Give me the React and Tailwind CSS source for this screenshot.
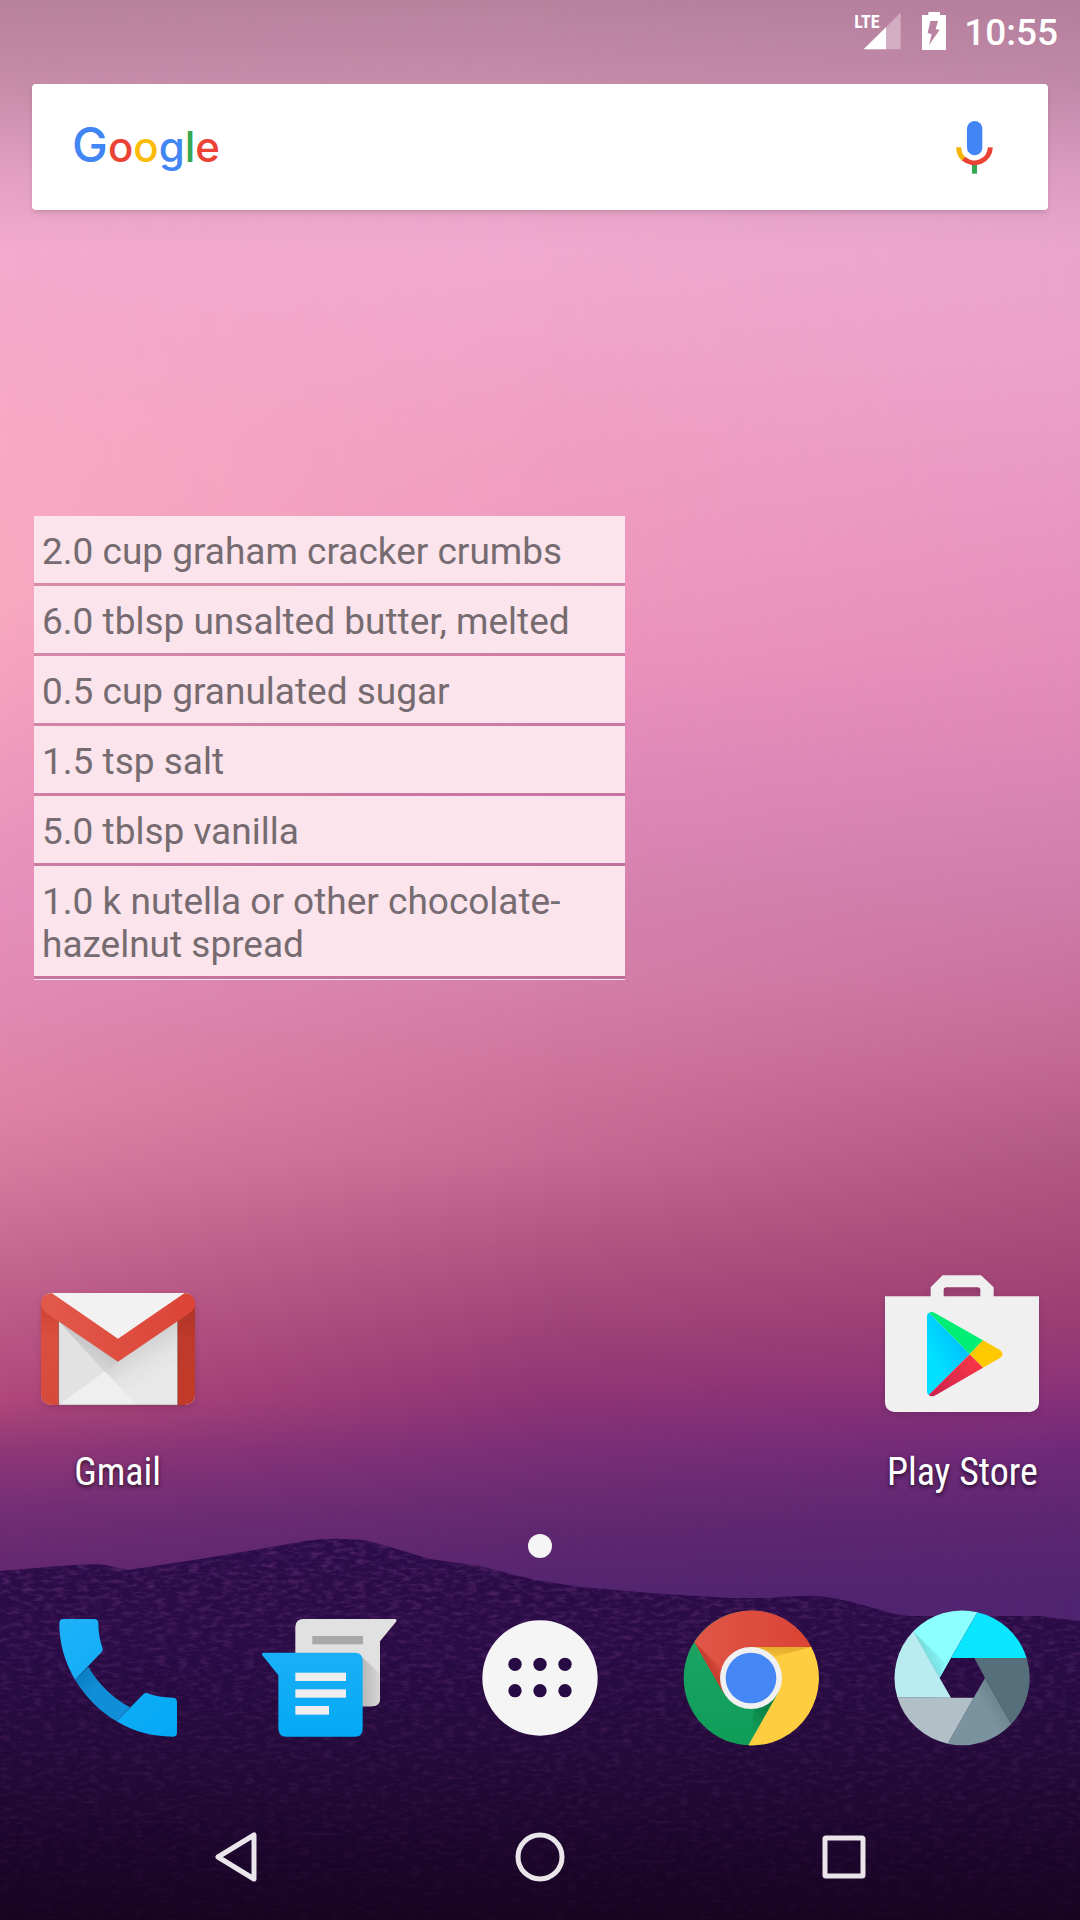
import React from "react";

const ingredients = [
  "2.0 cup graham cracker crumbs",
  "6.0 tblsp unsalted butter, melted",
  "0.5 cup granulated sugar",
  "1.5 tsp salt",
  "5.0 tblsp vanilla",
  "1.0 k nutella or other chocolate-hazelnut spread",
];

const leftSky = [
  [0, "#efa8ca"], [230, "#f2aace"], [350, "#f5a9c8"], [450, "#f8a9c3"], [600, "#f8a8c0"],
  [700, "#f3a0be"], [800, "#ec97bc"], [900, "#e68fba"], [1000, "#e28ab3"], [1100, "#e083a5"],
  [1180, "#d5779c"], [1270, "#c3658d"], [1400, "#b0477b"], [1450, "#903877"], [1510, "#742e76"], [1570, "#642870"],
];
const middleSky = [
  [0, "#eea8cc"], [230, "#f0aacf"], [350, "#f0a4c8"], [450, "#f09fc0"], [550, "#f09abf"], [650, "#ec94bb"],
  [750, "#e38bba"], [900, "#d682ae"], [980, "#d57fa8"], [1070, "#d0749c"], [1154, "#c86a93"], [1241, "#b35682"],
  [1327, "#a04379"], [1390, "#913575"], [1450, "#7a2f76"], [1530, "#602870"], [1600, "#52246f"],
];
const rightSky = [
  [0, "#e8a4ca"], [230, "#eaa6cc"], [350, "#eba2ca"], [500, "#e898c2"], [650, "#e58eb9"], [730, "#e088b5"],
  [807, "#d683b4"], [894, "#ce7caa"], [980, "#ca729e"], [1067, "#c26791"], [1154, "#b25882"], [1241, "#a84a78"],
  [1320, "#9b3d74"], [1380, "#8e3478"], [1450, "#70297a"], [1520, "#5c2672"], [1600, "#502470"],
];

function SkyGradient({ id, stops }) {
  return (
    <linearGradient id={id} gradientUnits="userSpaceOnUse" x1="0" y1="0" x2="0" y2="1920">
      {stops.map(([y, color]) => (
        <stop key={y} offset={y / 1920} stopColor={color} />
      ))}
    </linearGradient>
  );
}

const hills =
  "M0 1571 L60 1566 Q95 1563 105 1565 L128 1570 L200 1559 L260 1549 L305 1541 Q325 1538 345 1539 Q362 1539 372 1542 L400 1550 L430 1559 L480 1566 L535 1580 L580 1587 L650 1593 L730 1598 H770 Q800 1595 820 1596 Q845 1599 880 1610 Q895 1615 910 1616 H1040 L1080 1621 V1920 H0 Z";

function Wallpaper() {
  return (
    <svg className="absolute inset-0 h-full w-full" viewBox="0 0 1080 1920" preserveAspectRatio="none" aria-hidden="true">
      <defs>
        <SkyGradient id="skyLeft" stops={leftSky} />
        <SkyGradient id="skyMiddle" stops={middleSky} />
        <SkyGradient id="skyRight" stops={rightSky} />
        <linearGradient id="fadeMiddle">
          <stop offset="0" stopColor="#000" />
          <stop offset="0.5" stopColor="#fff" />
        </linearGradient>
        <linearGradient id="fadeRight">
          <stop offset="0.5" stopColor="#000" />
          <stop offset="1" stopColor="#fff" />
        </linearGradient>
        <mask id="maskMiddle">
          <rect width="1080" height="1920" fill="url(#fadeMiddle)" />
        </mask>
        <mask id="maskRight">
          <rect width="1080" height="1920" fill="url(#fadeRight)" />
        </mask>
        <linearGradient id="scrim" x2="0" y2="1">
          <stop offset="0" stopColor="#000" stopOpacity="0.23" />
          <stop offset="0.35" stopColor="#000" stopOpacity="0.17" />
          <stop offset="0.7" stopColor="#000" stopOpacity="0.06" />
          <stop offset="1" stopColor="#000" stopOpacity="0" />
        </linearGradient>
        <linearGradient id="hill" gradientUnits="userSpaceOnUse" x1="0" y1="1540" x2="0" y2="1920">
          <stop offset="0" stopColor="#2c0c4a" />
          <stop offset="0.3" stopColor="#290b45" />
          <stop offset="0.55" stopColor="#240a3a" />
          <stop offset="0.8" stopColor="#1c062c" />
          <stop offset="1" stopColor="#170421" />
        </linearGradient>
        <filter id="grass" x="0" y="0" width="1" height="1">
          <feTurbulence type="fractalNoise" baseFrequency="0.09 0.25" numOctaves="3" seed="4" />
          <feColorMatrix values="0 0 0 0 0.3  0 0 0 0 0.08  0 0 0 0 0.34  1.6 0 0 0 -0.7" />
        </filter>
        <linearGradient id="grassFade" gradientUnits="userSpaceOnUse" x1="0" y1="1540" x2="0" y2="1920">
          <stop offset="0" stopColor="#888" />
          <stop offset="0.5" stopColor="#444" />
          <stop offset="1" stopColor="#111" />
        </linearGradient>
        <mask id="grassMask">
          <path d={hills} fill="url(#grassFade)" />
        </mask>
      </defs>
      <rect width="1080" height="1920" fill="url(#skyLeft)" />
      <rect width="1080" height="1920" fill="url(#skyMiddle)" mask="url(#maskMiddle)" />
      <rect width="1080" height="1920" fill="url(#skyRight)" mask="url(#maskRight)" />
      <rect width="1080" height="250" fill="url(#scrim)" />
      <path d={hills} fill="url(#hill)" />
      <g mask="url(#grassMask)">
        <rect y="1530" width="1080" height="390" filter="url(#grass)" />
      </g>
    </svg>
  );
}

function SignalIcon() {
  return (
    <svg className="h-[42px] w-12" viewBox="102 30 144 126" aria-hidden="true">
      <path d="M242 38 V148 H131 Z" fill="#fff" fillOpacity="0.35" />
      <path d="M198 82 V148 H131 Z" fill="#fff" />
    </svg>
  );
}

function BatteryIcon() {
  return (
    <svg className="h-[42px] w-8" viewBox="294 30 96 126" role="img" aria-label="Battery charging">
      <path
        fillRule="evenodd"
        fill="#fff"
        d="M306 45 H325 V36 H360 V45 H378 V150 H306 Z M331 63 L323 99 L335 103 L327 135 L359 90 L347 87 L354 63 Z"
      />
    </svg>
  );
}

function MicIcon() {
  return (
    <svg className="h-[60px] w-[60px]" viewBox="372 351 180 180" aria-hidden="true">
      <rect x="441" y="363" width="46" height="103" rx="23" fill="#4285f4" />
      <rect x="456" y="494" width="15" height="27" fill="#34a853" />
      <g fill="none" strokeWidth="15">
        <path d="M416 442 A48 48 0 0 0 431 477" stroke="#f4b400" />
        <path d="M431 476 A48 48 0 0 0 511 442" stroke="#ea4335" />
      </g>
    </svg>
  );
}

function GmailIcon() {
  return (
    <svg className="h-36 w-40 drop-shadow-md" viewBox="54 36 480 432" aria-hidden="true">
      <defs>
        <linearGradient id="gmLeft" x2="0" y2="1">
          <stop offset="0" stopColor="#c8402f" />
          <stop offset="0.4" stopColor="#dc4f40" />
          <stop offset="1" stopColor="#d64a3b" />
        </linearGradient>
        <linearGradient id="gmRight" x2="0" y2="1">
          <stop offset="0" stopColor="#a93225" />
          <stop offset="0.4" stopColor="#bf3a2b" />
          <stop offset="1" stopColor="#c23a29" />
        </linearGradient>
        <linearGradient id="gmFlap">
          <stop offset="0" stopColor="#e2594b" />
          <stop offset="1" stopColor="#db4437" />
        </linearGradient>
        <linearGradient id="gmPaper" gradientUnits="userSpaceOnUse" x1="330" y1="270" x2="390" y2="370">
          <stop offset="0" stopColor="#d2d2d2" />
          <stop offset="0.5" stopColor="#e2e2e2" />
          <stop offset="1" stopColor="#e9e9e9" />
        </linearGradient>
        <linearGradient id="gmShade" gradientUnits="userSpaceOnUse" x1="220" y1="240" x2="170" y2="320">
          <stop offset="0" stopColor="#c4c4c4" />
          <stop offset="1" stopColor="#e0e0e0" />
        </linearGradient>
        <clipPath id="gmClip">
          <rect x="63" y="99" width="462" height="336" rx="30" />
        </clipPath>
      </defs>
      <g clipPath="url(#gmClip)">
        <rect x="63" y="99" width="462" height="336" fill="url(#gmPaper)" />
        <path d="M116 184 V435 L254 335 Z" fill="#e2e2e2" />
        <path d="M116 184 L254 335 L310 295 Z" fill="url(#gmShade)" />
        <path d="M116 435 L254 334 L350 435 Z" fill="#efefef" />
        <rect x="63" y="110" width="53" height="325" fill="url(#gmLeft)" />
        <rect x="473" y="110" width="53" height="325" fill="url(#gmRight)" />
        <path d="M116 184 V435 M473 184 V435" stroke="#000" strokeOpacity="0.25" strokeWidth="3" />
        <path d="M116 433 H473" stroke="#000" strokeOpacity="0.15" strokeWidth="3" />
        <path d="M90 99 H500 L294 240 Z" fill="#f2f2f2" />
      </g>
      <path
        d="M95 99 L294 236 L494 99 Q525 101 525 132 Q525 149 508 160 L294 305 L80 160 Q63 148 63 130 Q64 101 95 99 Z"
        fill="url(#gmFlap)"
      />
    </svg>
  );
}

function PlayStoreIcon() {
  return (
    <svg className="h-36 w-40 drop-shadow-md" viewBox="66 36 480 432" aria-hidden="true">
      <defs>
        <linearGradient id="psBlue" x1="1" y1="0" x2="0" y2="1">
          <stop offset="0" stopColor="#00b0ff" />
          <stop offset="0.7" stopColor="#00e0ff" />
        </linearGradient>
        <linearGradient id="psRed" x1="1" y1="0" x2="0" y2="1">
          <stop offset="0" stopColor="#ff3a44" />
          <stop offset="1" stopColor="#c9204f" />
        </linearGradient>
      </defs>
      <path
        fillRule="evenodd"
        fill="#f0f0f0"
        d="M75 109 H212 V82 L248 46 H363 L401 82 V109 H537 V430 Q534 453 511 456 H102 Q78 453 75 430 Z M251 109 H361 V90 Q361 82 353 82 H259 Q251 82 251 90 Z"
      />
      <path d="M207 158 Q214 153 226 160 L369 241 L329 283 Z" fill="#00ee76" />
      <path d="M201 168 Q201 160 207 158 L329 283 L206 405 Q201 402 201 394 Z" fill="url(#psBlue)" />
      <path d="M369 241 L420 270 Q436 283 420 294 L369 323 L329 283 Z" fill="#ffc900" />
      <path d="M206 405 Q214 413 228 405 L369 323 L329 283 Z" fill="url(#psRed)" />
    </svg>
  );
}

function PhoneIcon() {
  return (
    <svg className="h-36 w-36" viewBox="48 48 432 432" aria-hidden="true">
      <defs>
        <linearGradient id="phBlue" gradientUnits="userSpaceOnUse" x1="88" y1="87" x2="441" y2="440">
          <stop offset="0" stopColor="#1eb1f8" />
          <stop offset="1" stopColor="#03a9f4" />
        </linearGradient>
        <linearGradient id="phDark" gradientUnits="userSpaceOnUse" x1="150" y1="245" x2="200" y2="300">
          <stop offset="0" stopColor="#0c7cc0" />
          <stop offset="1" stopColor="#108fd8" />
        </linearGradient>
      </defs>
      <path d="M175 230 Q220 308 300 352 L260 394 Q185 350 135 269 Z" fill="url(#phDark)" />
      <path d="M100 87 H193 Q205 87 205 100 Q205 140 218 176 Q219 181 215 186 L135 269 Q88 190 88 100 Q88 87 100 87 Z" fill="url(#phBlue)" />
      <path d="M350 309 Q387 323 428 323 Q441 323 441 336 V428 Q441 440 428 440 Q335 440 260 394 L340 313 Q344 308 350 309 Z" fill="url(#phBlue)" />
    </svg>
  );
}

function MessengerIcon() {
  return (
    <svg className="h-36 w-36" viewBox="681 48 432 432" aria-hidden="true">
      <defs>
        <linearGradient id="msBlue" x2="0" y2="1">
          <stop offset="0" stopColor="#1aaff8" />
          <stop offset="1" stopColor="#03a9f4" />
        </linearGradient>
        <linearGradient id="msShade">
          <stop offset="0" stopColor="#b4b4b4" />
          <stop offset="1" stopColor="#d6d6d6" />
        </linearGradient>
      </defs>
      <path d="M820 87 H1094 Q1103 88 1098 95 L1050 154 V325 Q1050 349 1026 349 H900 V200 H796 V110 Q797 88 820 87 Z" fill="#e1e1e1" />
      <path d="M990 194 L1050 252 V325 Q1050 349 1026 349 H990 Z" fill="url(#msShade)" />
      <rect x="847" y="138" width="152" height="25" fill="#a8a8a8" />
      <path d="M700 188 H975 Q998 189 998 211 V416 Q998 439 975 440 H768 Q746 439 745 416 V256 L697 196 Q694 189 700 188 Z" fill="url(#msBlue)" />
      <g fill="#eeeeee">
        <rect x="796" y="248" width="152" height="25" />
        <rect x="796" y="298" width="152" height="25" />
        <rect x="796" y="348" width="101" height="26" />
      </g>
    </svg>
  );
}

function AppsIcon() {
  return (
    <svg className="h-36 w-36" viewBox="24 318 432 432" aria-hidden="true">
      <circle cx="240" cy="534" r="173" fill="#f5f5f5" />
      <g fill="#280a44">
        {[493, 572].map((cy) => [165, 240, 315].map((cx) => <circle key={cx + "-" + cy} cx={cx} cy={cy} r="20" />))}
      </g>
    </svg>
  );
}

function ChromeIcon() {
  return (
    <svg className="h-36 w-36" viewBox="657 318 432 432" aria-hidden="true">
      <defs>
        <linearGradient id="chRed">
          <stop offset="0" stopColor="#e05648" />
          <stop offset="1" stopColor="#da4334" />
        </linearGradient>
        <linearGradient id="chGreen" x2="0" y2="1">
          <stop offset="0" stopColor="#1fa566" />
          <stop offset="1" stopColor="#0f9d58" />
        </linearGradient>
        <linearGradient id="chGreenShade" gradientUnits="userSpaceOnUse" x1="930" y1="620" x2="875" y2="690">
          <stop offset="0" stopColor="#0b7f43" />
          <stop offset="1" stopColor="#0f9d58" />
        </linearGradient>
        <linearGradient id="chYellowShade" x2="0" y2="1">
          <stop offset="0" stopColor="#e3ab2c" />
          <stop offset="1" stopColor="#f4c038" />
        </linearGradient>
        <linearGradient id="chRedShade" gradientUnits="userSpaceOnUse" x1="745" y1="510" x2="780" y2="490">
          <stop offset="0" stopColor="#c13a2c" />
          <stop offset="1" stopColor="#d94c3d" />
        </linearGradient>
      </defs>
      <circle cx="873" cy="534" r="202" fill="url(#chGreen)" />
      <path d="M885 610 L950 585 L865 736 Z" fill="url(#chGreenShade)" />
      <path d="M873 441 H1054 A202 202 0 0 1 865 736 L953 581 Z" fill="#ffcd40" />
      <path d="M873 441 H1054 L940 472 Z" fill="url(#chYellowShade)" />
      <path d="M703 426 A202 202 0 0 1 1054 441 H873 L793 581 Z" fill="url(#chRed)" />
      <path d="M703 426 L800 520 L790 578 Z" fill="url(#chRedShade)" />
      <circle cx="873" cy="534" r="93" fill="#f1f1f1" />
      <circle cx="873" cy="534" r="76" fill="#4587f4" />
    </svg>
  );
}

function CameraIcon() {
  return (
    <svg className="h-36 w-36" viewBox="60 48 432 432" aria-hidden="true">
      <defs>
        <linearGradient id="caShade" gradientUnits="userSpaceOnUse" x1="170" y1="195" x2="205" y2="180">
          <stop offset="0" stopColor="#78dede" />
          <stop offset="1" stopColor="#86f4f5" />
        </linearGradient>
        <linearGradient id="caSlate" gradientUnits="userSpaceOnUse" x1="385" y1="332" x2="345" y2="356">
          <stop offset="0" stopColor="#6d8590" />
          <stop offset="1" stopColor="#7b939f" />
        </linearGradient>
      </defs>
      <path d="M130 124 A202 202 0 0 1 322 67 L243 204 L209 264 Z" fill="#8cffff" />
      <path d="M130 124 L225 218 L209 264 Z" fill="url(#caShade)" />
      <path d="M322 67 A202 202 0 0 1 470 204 H243 Z" fill="#0ae6ff" />
      <path d="M470 204 A202 202 0 0 1 424 402 L345 264 L313 204 Z" fill="#56707b" />
      <path d="M424 402 A202 202 0 0 1 233 461 L311 323 L345 264 Z" fill="url(#caSlate)" />
      <path d="M233 461 A202 202 0 0 1 82 322 L243 323 H311 Z" fill="#b1bfc6" />
      <path d="M82 322 A202 202 0 0 1 130 124 L209 264 L243 323 Z" fill="#b8ecf1" />
    </svg>
  );
}

const dock = [
  ["Phone", PhoneIcon],
  ["Messenger", MessengerIcon],
  ["Apps", AppsIcon],
  ["Chrome", ChromeIcon],
  ["Camera", CameraIcon],
];

function Shortcut({ label, Icon }) {
  return (
    <button type="button" className="flex flex-col items-center gap-8">
      <Icon />
      <span className="font-['Roboto_Condensed',Roboto,sans-serif] text-[38px] leading-12 whitespace-nowrap text-white [text-shadow:0_2px_4px_rgba(0,0,0,0.7)]">
        {label}
      </span>
    </button>
  );
}

export default function App() {
  return (
    <div className="relative isolate flex min-h-screen flex-col overflow-hidden bg-[#170421] font-[Roboto,sans-serif]">
      <Wallpaper />

      <header className="relative flex h-[72px] items-start justify-end pt-[10px] pr-[22px] text-white">
        <div className="relative mr-4">
          <SignalIcon />
          <span className="absolute top-0 left-0 font-['Roboto_Condensed',Roboto,sans-serif] text-[18px] leading-6 font-bold">LTE</span>
        </div>
        <BatteryIcon />
        <time className="ml-3.5 text-[37px] leading-[46px] font-medium">10:55</time>
      </header>

      <section className="relative mx-8 mt-3 flex h-[126px] items-center justify-between rounded bg-white pr-11 pl-10 shadow-md">
        <button type="button" aria-label="Google Search" className="pb-1 font-[Inter,Roboto,sans-serif] text-[42px] leading-none font-medium text-[#4285f4]">
          <span className="text-[48px]">G</span>
          <span className="text-[#ea4335]">o</span>
          <span className="text-[#fbbc05]">o</span>
          <span>g</span>
          <span className="text-[#34a853]">l</span>
          <span className="text-[#ea4335]">e</span>
        </button>
        <button type="button" aria-label="Voice search">
          <MicIcon />
        </button>
      </section>

      <main className="relative mt-[306px] flex flex-1 flex-col">
        <ul className="mr-[455px] ml-[34px] border-b border-[#fce4ec]">
          {ingredients.map((item) => (
            <li key={item} className="border-b-3 border-[#7d3c64]/25 bg-[#fbe4eb] bg-clip-padding px-2 pt-[14px] pb-[10px] text-[37px] leading-[43px] text-[#756b70]">
              {item}
            </li>
          ))}
        </ul>

        <div className="mt-auto grid grid-cols-5 px-3 pb-[38px]">
          <Shortcut label="Gmail" Icon={GmailIcon} />
          <div className="col-start-5 grid">
            <Shortcut label="Play Store" Icon={PlayStoreIcon} />
          </div>
        </div>
      </main>

      <div className="relative flex justify-center">
        <span className="h-6 w-6 rounded-full bg-[#f5f5f5]" />
      </div>

      <nav aria-label="Favorites" className="relative grid h-[236px] grid-cols-5 items-center px-3 pt-1">
        {dock.map(([label, Icon]) => (
          <button key={label} type="button" aria-label={label} className="flex justify-center">
            <Icon />
          </button>
        ))}
      </nav>

      <nav aria-label="System" className="relative grid h-[126px] grid-cols-3 place-items-center px-[84px]">
        <button type="button" aria-label="Back">
          <svg className="h-15 w-15" viewBox="0 0 60 60" fill="none" stroke="#e9e5eb" strokeWidth="5" strokeLinejoin="round">
            <path d="M48 8 V52 L12 30 Z" />
          </svg>
        </button>
        <button type="button" aria-label="Home">
          <svg className="h-15 w-15" viewBox="0 0 60 60" fill="none" stroke="#e9e5eb" strokeWidth="5">
            <circle cx="30" cy="30" r="22" />
          </svg>
        </button>
        <button type="button" aria-label="Recent apps">
          <svg className="h-15 w-15" viewBox="0 0 60 60" fill="none" stroke="#e9e5eb" strokeWidth="5" strokeLinejoin="round">
            <rect x="11" y="11" width="38" height="38" rx="1" />
          </svg>
        </button>
      </nav>
    </div>
  );
}
